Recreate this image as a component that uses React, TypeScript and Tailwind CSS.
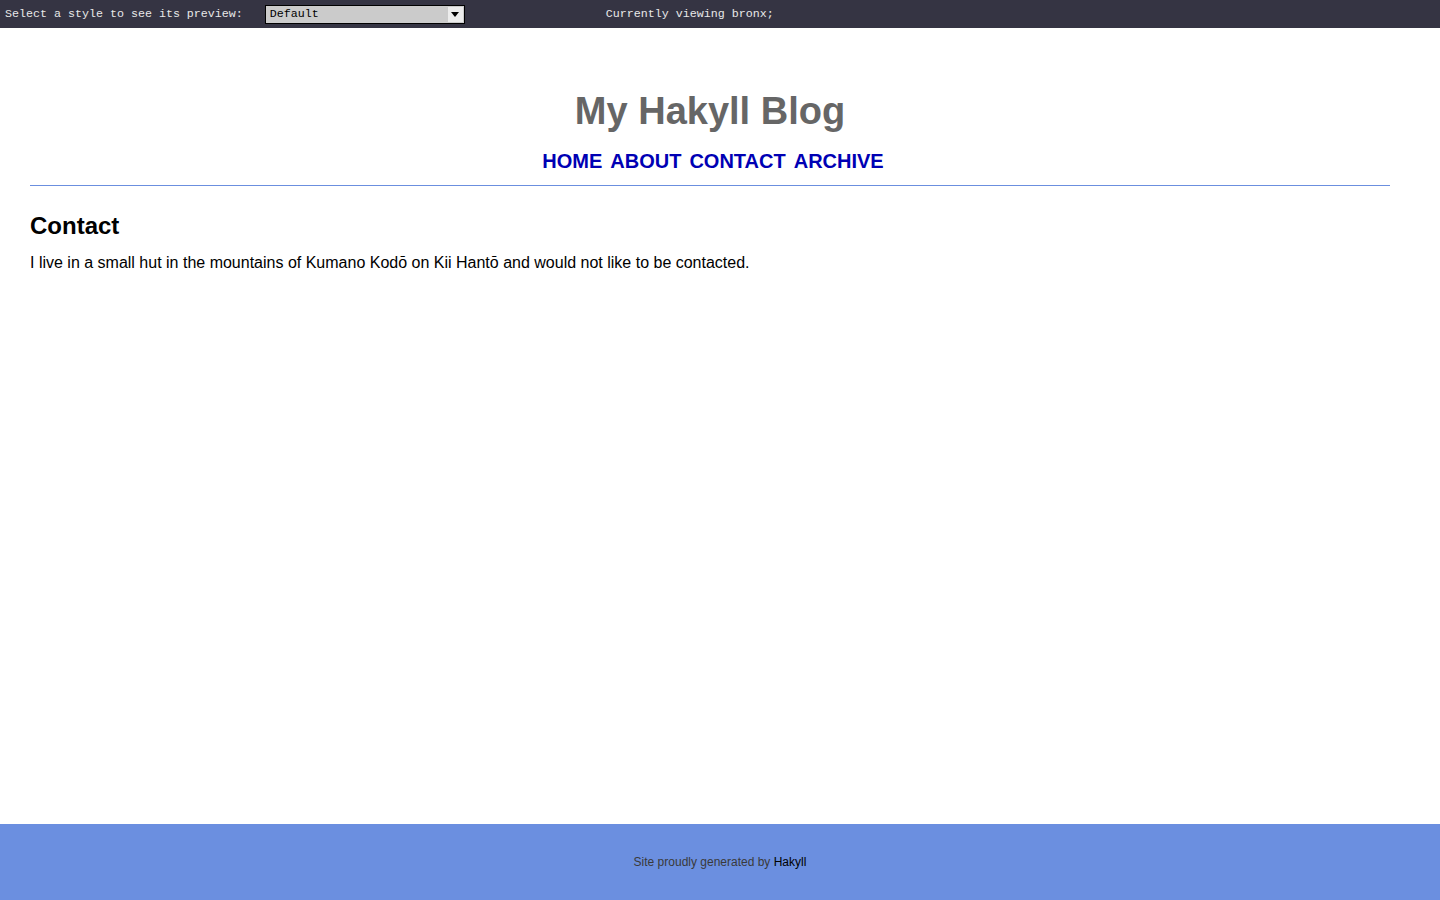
import React from 'react';

const navLinks = ['Home', 'About', 'Contact', 'Archive'];

function StyleBar() {
  return (
    <div className="h-[28px] bg-[#353443] flex items-center pt-px text-[#e8e8e8] text-[11.67px] font-['Liberation_Mono',monospace] whitespace-pre">
      <span className="ml-[5px]">Select a style to see its preview:</span>
      <div className="ml-[22px] w-[200px] h-[19px] bg-[#cbcbcb] border border-black flex items-center justify-between text-black">
        <span className="pl-[4px]">Default</span>
        <span className="mr-[1px] w-[15px] h-[15px] bg-[#ececec] flex items-center justify-center">
          <svg width="8" height="5" viewBox="0 0 8 5">
            <path d="M0 0h8L4 5z" fill="#000" />
          </svg>
        </span>
      </div>
      <span className="ml-[141px]">Currently viewing bronx;</span>
    </div>
  );
}

export default function App() {
  return (
    <div className="min-h-screen flex flex-col bg-white font-['Liberation_Sans',Arial,sans-serif]">
      <StyleBar />

      <div className="pl-[30px] pr-[50px]">
        <header className="pt-[61px]">
          <h1 className="text-center text-[38px] leading-[44px] font-bold text-[#666666]">My Hakyll Blog</h1>
          <nav className="mt-[16px] pl-[6px] flex justify-center gap-[8px]">
            {navLinks.map((l) => (
              <a key={l} href="#" className="text-[20px] leading-[24px] font-bold uppercase text-[#0000b4]">
                {l}
              </a>
            ))}
          </nav>
          <div className="mt-[12px] h-px bg-[#6b8fdf]" />
        </header>

        <main>
          <h2 className="mt-[25px] text-[24px] leading-[30px] font-bold text-black">Contact</h2>
          <p className="mt-[11px] text-[16px] leading-[21px] text-black">
            I live in a small hut in the mountains of Kumano Kodō on Kii Hantō and would not like to be contacted.
          </p>
        </main>
      </div>

      <footer className="mt-auto h-[76px] bg-[#6b8fe0] flex items-center justify-center text-[12px] leading-[14px] text-[#3a3a3a]">
        <span>
          Site proudly generated by <a href="#" className="text-black">Hakyll</a>
        </span>
      </footer>
    </div>
  );
}
